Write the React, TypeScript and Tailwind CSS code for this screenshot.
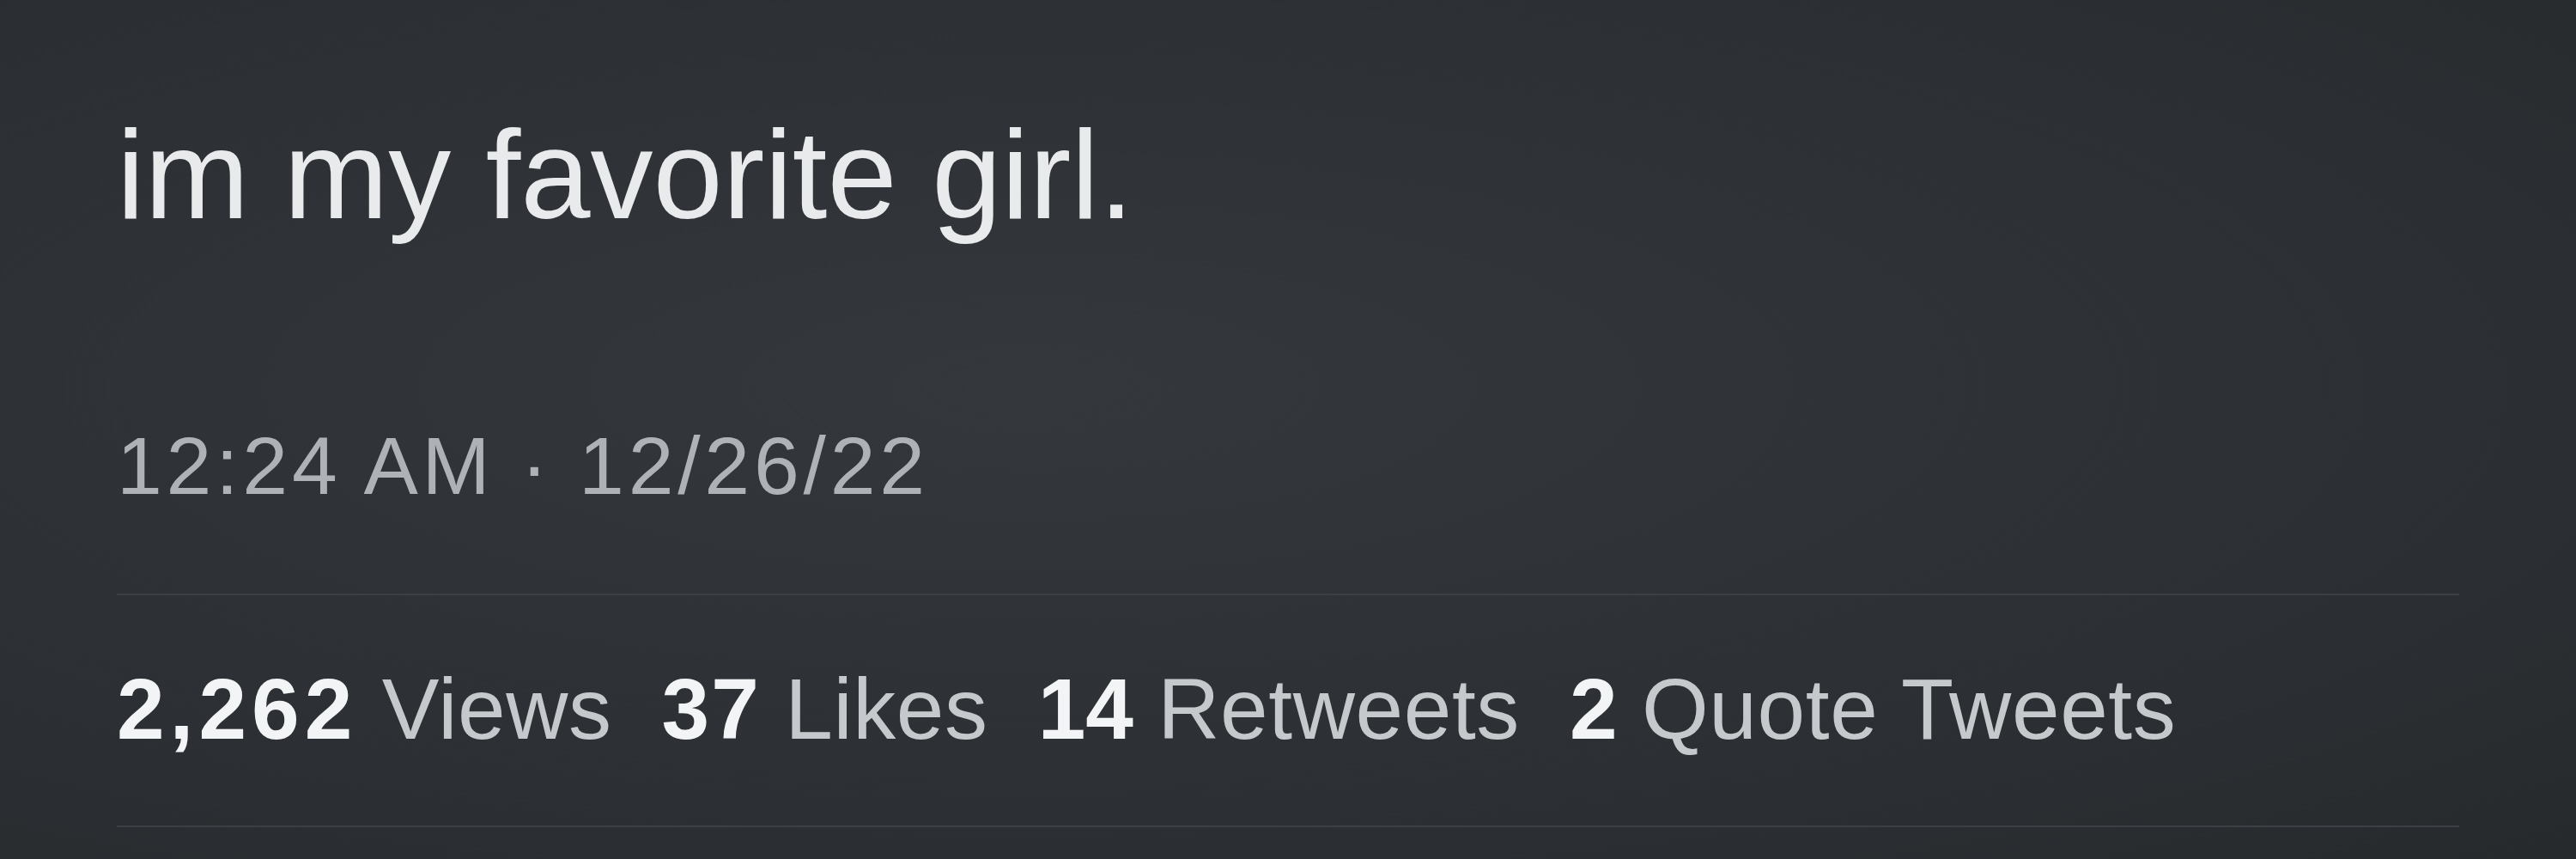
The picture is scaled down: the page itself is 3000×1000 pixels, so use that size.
const stats = [
  { value: '2,262', label: 'Views', track: 'tracking-[0.06em]' },
  { value: '37', label: 'Likes', track: 'tracking-[0.02em]' },
  { value: '14', label: 'Retweets', track: 'tracking-normal' },
  { value: '2', label: 'Quote Tweets', track: 'tracking-normal' },
]

function Divider() {
  return <div className="h-[2px] w-full bg-[#3c4044]" />
}

export default function App() {
  return (
    <div
      className="flex h-[1000px] w-[3000px] flex-col overflow-hidden bg-[#2c3034] bg-[radial-gradient(ellipse_at_40%_45%,#34383c_0%,#2d3135_55%,#272a2d_100%)] px-[136px]"
      style={{ fontFamily: '"Liberation Sans", Arial, sans-serif' }}
    >
      <p className="pt-[131px] text-[146px] leading-none text-[#e8eaeb]">
        im my favorite girl.
      </p>

      <p className="mt-[218px] text-[95px] leading-none tracking-[0.05em] text-[#aeb2b6]">
        12:24 AM · 12/26/22
      </p>

      <div className="mt-[101px]">
        <Divider />
      </div>

      <div className="mt-[82px] flex gap-[58px] text-[100px] leading-none">
        {stats.map((s) => (
          <span key={s.label} className="whitespace-nowrap">
            <span className={`font-bold text-[#f3f4f5] ${s.track}`}>{s.value}</span>
            <span className="tracking-[0.006em] text-[#c6c9cc]"> {s.label}</span>
          </span>
        ))}
      </div>

      <div className="mt-[86px]">
        <Divider />
      </div>
    </div>
  )
}
